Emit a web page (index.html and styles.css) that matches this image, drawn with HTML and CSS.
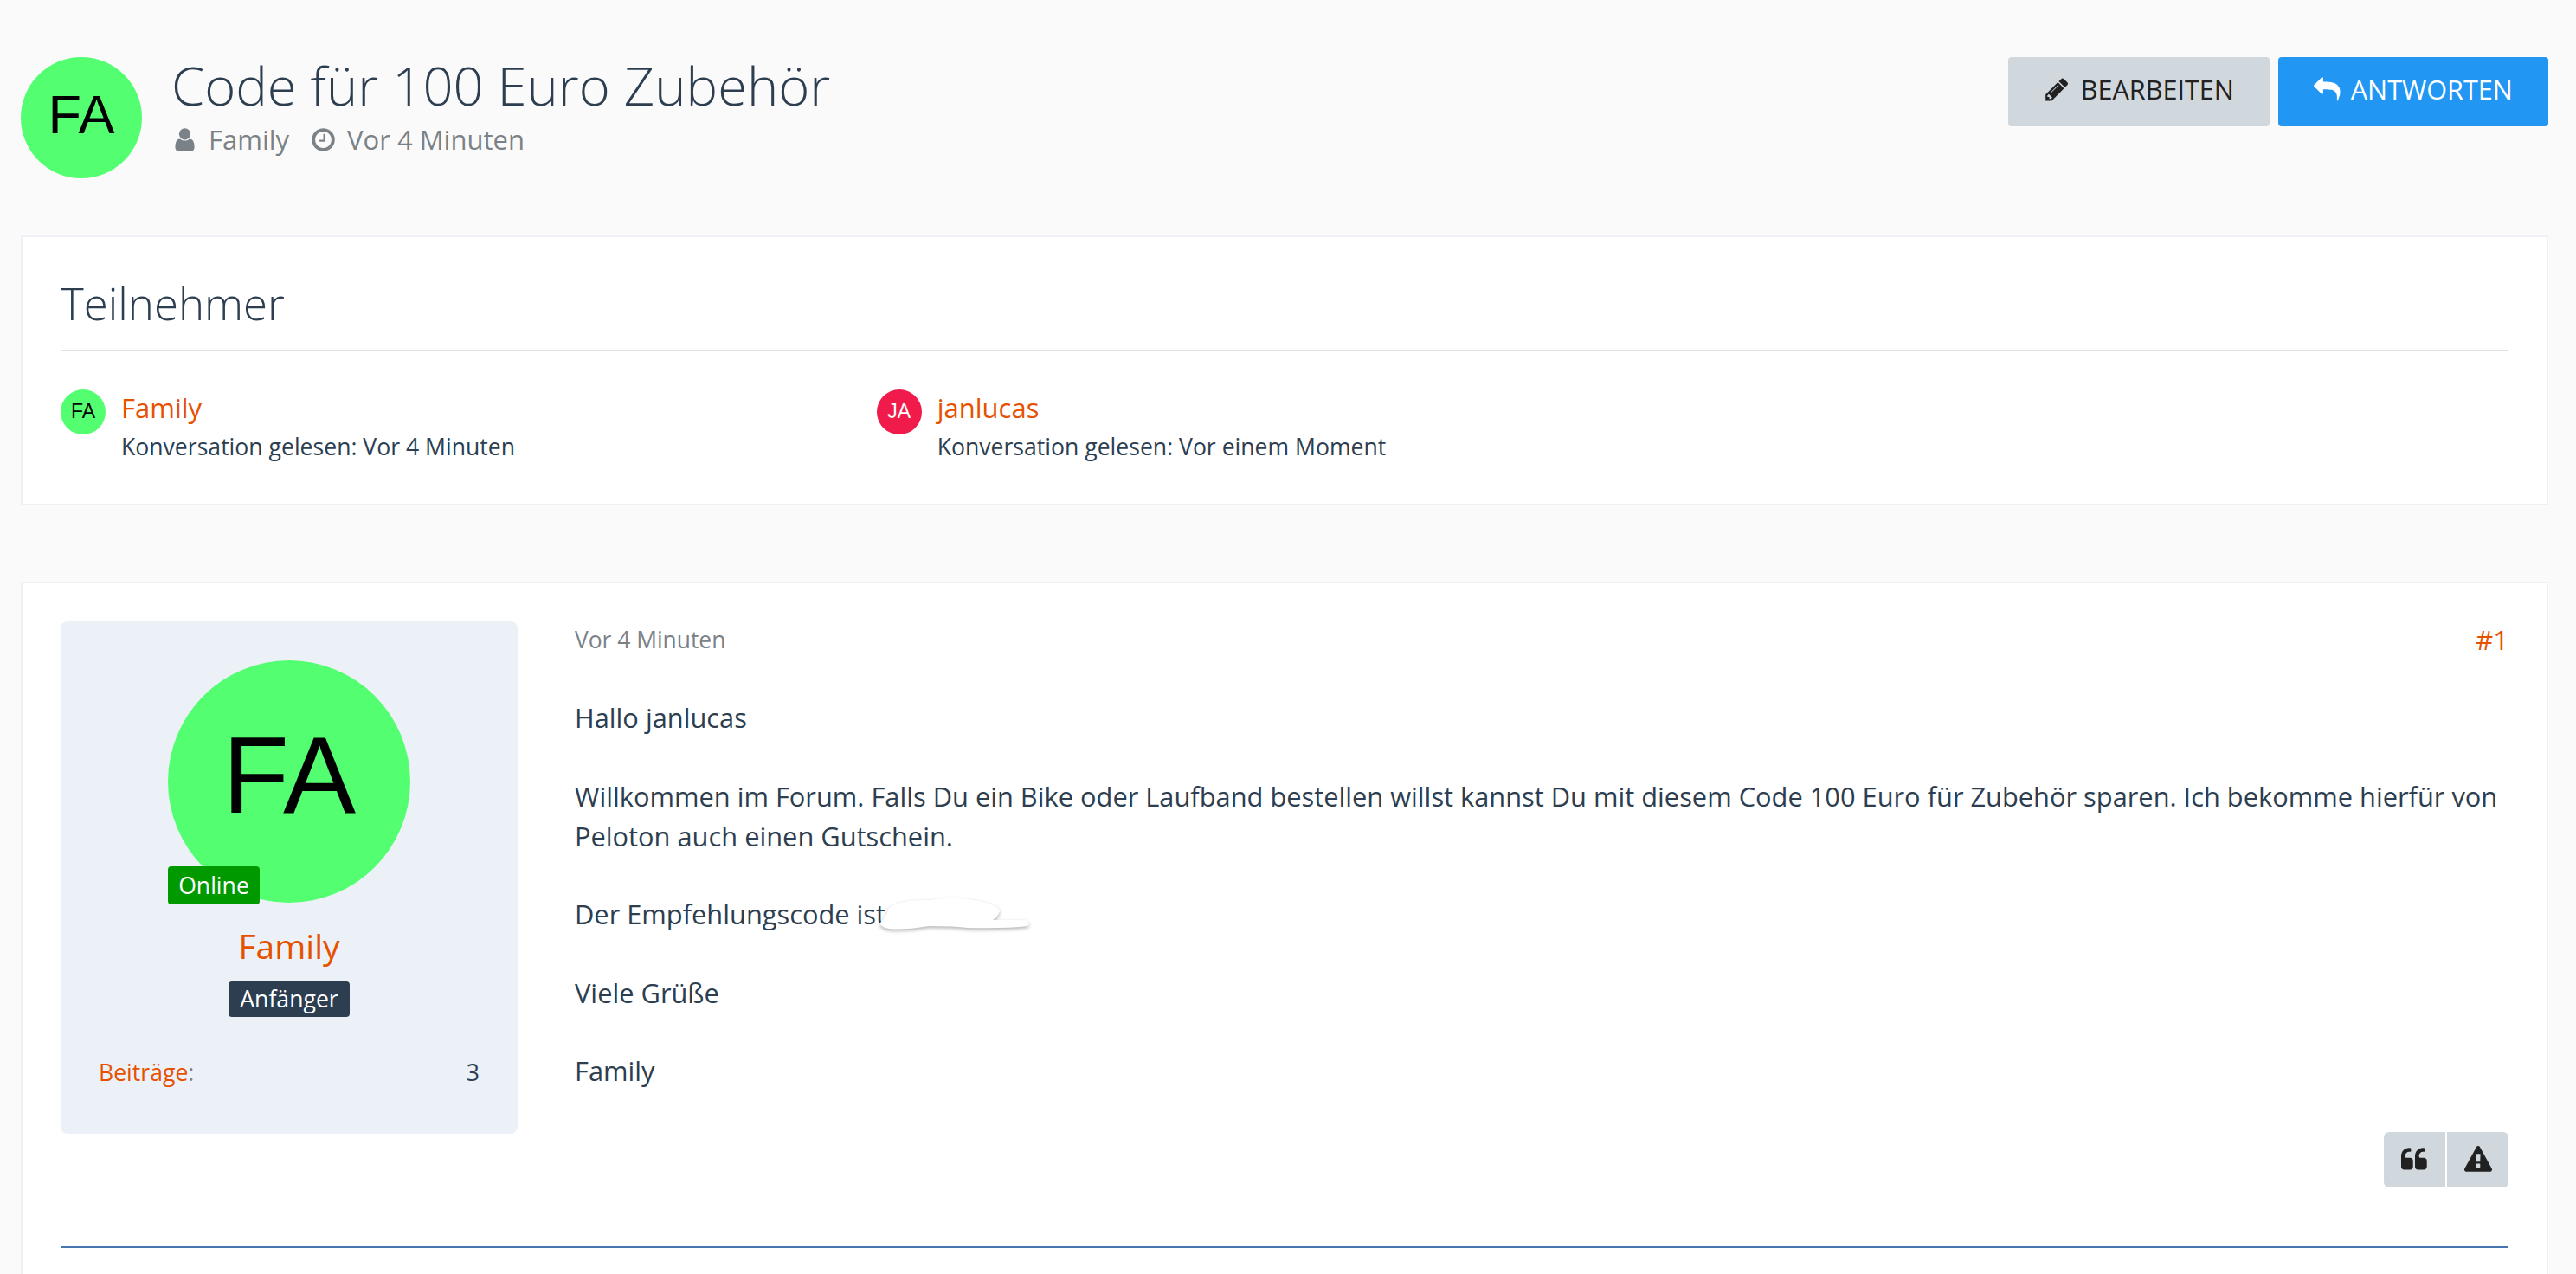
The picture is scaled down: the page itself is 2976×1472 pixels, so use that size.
FILE: index.html
```html
<!DOCTYPE html>
<html lang="de">
<head>
    <meta charset="UTF-8">
    <title>Code für 100 Euro Zubehör</title>
    <link rel="stylesheet" href="styles.css">
</head>
<body>
    <div class="page">
        <div class="topic-header">
            <div class="avatar avatar-md avatar-green">FA</div>
            <div class="topic-info">
                <h1>Code für 100 Euro Zubehör</h1>
                <div class="topic-meta">
                    <span class="meta-item">
                        <svg class="icon" viewBox="0 0 1792 1792"><path d="M1536 1399q0 109-62.5 187t-150.5 78h-854q-88 0-150.5-78t-62.5-187q0-85 8.5-160.5t31.5-152 58.5-131 94-89 134.5-34.5q131 128 313 128t313-128q76 0 134.5 34.5t94 89 58.5 131 31.5 152 8.5 160.5zm-256-887q0 159-112.5 271.5t-271.5 112.5-271.5-112.5-112.5-271.5 112.5-271.5 271.5-112.5 271.5 112.5 112.5 271.5z"/></svg>
                        Family
                    </span>
                    <span class="meta-item">
                        <svg class="icon" viewBox="0 0 1792 1792"><path d="M1024 544v448q0 14-9 23t-23 9h-320q-14 0-23-9t-9-23v-64q0-14 9-23t23-9h224v-352q0-14 9-23t23-9h64q14 0 23 9t9 23zm416 352q0-148-73-273t-198-198-273-73-273 73-198 198-73 273 73 273 198 198 273 73 273-73 198-198 73-273zm224 0q0 209-103 385.5t-279.5 279.5-385.5 103-385.5-103-279.5-279.5-103-385.5 103-385.5 279.5-279.5 385.5-103 385.5 103 279.5 279.5 103 385.5z"/></svg>
                        Vor 4 Minuten
                    </span>
                </div>
            </div>
            <div class="topic-actions">
                <button class="btn btn-grey">
                    <svg class="icon" viewBox="0 0 1792 1792"><path d="M491 1536l91-91-235-235-91 91v107h128v128h107zm523-928q0-22-22-22-10 0-17 7l-542 542q-7 7-7 17 0 22 22 22 10 0 17-7l542-542q7-7 7-17zm-54-192l416 416-832 832h-416v-416zm683 96q0 53-37 90l-166 166-416-416 166-165q36-38 90-38 53 0 91 38l235 234q37 39 37 91z"/></svg>
                    BEARBEITEN
                </button>
                <button class="btn btn-blue">
                    <svg class="icon" viewBox="0 0 1792 1792"><path d="M1792 1120q0 166-127 451-3 7-10.5 24t-13.5 30-13 22q-12 17-28 17-15 0-23.5-10t-8.5-25q0-9 2.5-26.5t2.5-23.5q5-68 5-123 0-101-17.5-181t-48.5-138.5-80-101-105.5-69.5-133-42.5-154-21.5-175.5-6h-224v256q0 26-19 45t-45 19-45-19l-512-512q-19-19-19-45t19-45l512-512q19-19 45-19t45 19 19 45v256h224q713 0 875 403 53 134 53 333z"/></svg>
                    ANTWORTEN
                </button>
            </div>
        </div>

        <div class="card participants">
            <h2>Teilnehmer</h2>
            <div class="participant-list">
                <div class="participant">
                    <div class="avatar avatar-sm avatar-green">FA</div>
                    <div>
                        <a class="user-link">Family</a>
                        <div class="read-info">Konversation gelesen: Vor 4 Minuten</div>
                    </div>
                </div>
                <div class="participant">
                    <div class="avatar avatar-sm avatar-red">JA</div>
                    <div>
                        <a class="user-link">janlucas</a>
                        <div class="read-info">Konversation gelesen: Vor einem Moment</div>
                    </div>
                </div>
            </div>
        </div>

        <div class="card post">
            <div class="post-row">
                <div class="user-panel">
                    <div class="avatar-wrap">
                        <div class="avatar avatar-lg avatar-green">FA</div>
                        <span class="online-badge">Online</span>
                    </div>
                    <a class="panel-name">Family</a>
                    <span class="rank-badge">Anfänger</span>
                    <div class="panel-stat">
                        <span><span class="stat-label">Beiträge</span><span class="stat-colon">:</span></span>
                        <span>3</span>
                    </div>
                </div>
                <div class="post-main">
                    <div class="post-head">
                        <span class="post-date">Vor 4 Minuten</span>
                        <a class="post-number">#1</a>
                    </div>
                    <div class="post-body">
                        <p>Hallo janlucas</p>
                        <p>Willkommen im Forum. Falls Du ein Bike oder Laufband bestellen willst kannst Du mit diesem Code 100 Euro für Zubehör sparen. Ich bekomme hierfür von Peloton auch einen Gutschein.</p>
                        <p>Der Empfehlungscode ist<span class="redacted"><svg class="redact-blob" viewBox="0 0 176 38"><path d="M3 30 Q10 24 14 12 Q28 2 60 3 Q90 -2 118 4 Q140 8 142 16 Q140 22 134 26 L172 26 Q178 30 174 33 Q150 36 104 35 Q90 33 60 33 Q30 38 14 36 Q6 35 3 30 Z"/></svg></span></p>
                        <p>Viele Grüße</p>
                        <p>Family</p>
                    </div>
                    <div class="post-tools">
                        <button class="tool-btn">
                            <svg class="icon" viewBox="0 0 1792 1792"><path d="M768 960v384q0 80-56 136t-136 56h-384q-80 0-136-56t-56-136v-704q0-104 40.5-198.5t109.5-163.5 163.5-109.5 198.5-40.5h64q26 0 45 19t19 45v128q0 26-19 45t-45 19h-64q-106 0-181 75t-75 181v32q0 40 28 68t68 28h224q80 0 136 56t56 136zm896 0v384q0 80-56 136t-136 56h-384q-80 0-136-56t-56-136v-704q0-104 40.5-198.5t109.5-163.5 163.5-109.5 198.5-40.5h64q26 0 45 19t19 45v128q0 26-19 45t-45 19h-64q-106 0-181 75t-75 181v32q0 40 28 68t68 28h224q80 0 136 56t56 136z"/></svg>
                        </button>
                        <button class="tool-btn">
                            <svg class="icon" viewBox="0 0 1792 1792"><path d="M1024 1375v-190q0-14-9.5-23.5t-22.5-9.5h-192q-13 0-22.5 9.5t-9.5 23.5v190q0 14 9.5 23.5t22.5 9.5h192q13 0 22.5-9.5t9.5-23.5zm-2-374l18-459q0-12-10-19-13-11-24-11h-220q-11 0-24 11-10 7-10 21l17 457q0 10 10 16.5t24 6.5h185q14 0 23.5-6.5t10.5-16.5zm-14-934l768 1408q35 63-2 126-17 29-46.5 46t-63.5 17h-1536q-34 0-63.5-17t-46.5-46q-37-63-2-126l768-1408q17-31 47-49t65-18 65 18 47 49z"/></svg>
                        </button>
                    </div>
                </div>
            </div>
            <div class="post-divider"></div>
        </div>
    </div>
</body>
</html>
```

FILE: styles.css
```css
* {
    margin: 0;
    padding: 0;
    box-sizing: border-box;
}

html, body {
    height: 1472px;
    overflow: hidden;
}

body {
    font-family: 'Open Sans', 'Liberation Sans', sans-serif;
    background-color: #fafafa;
    color: #2c3e50;
    font-size: 30.8px;
}

.page {
    padding: 66px 32px 0 24px;
}

.icon {
    width: 1em;
    height: 1em;
    fill: currentColor;
    flex: none;
}

/* avatars */
.avatar {
    border-radius: 50%;
    display: flex;
    align-items: center;
    justify-content: center;
    font-family: 'Liberation Sans', Arial, sans-serif;
    flex: none;
}

.avatar-sm {
    width: 52px;
    height: 52px;
    font-size: 23px;
    padding-bottom: 2px;
}

.avatar-md {
    width: 140px;
    height: 140px;
    font-size: 63px;
    padding-bottom: 8px;
}

.avatar-lg {
    width: 280px;
    height: 280px;
    font-size: 126px;
    padding-bottom: 16px;
}

.avatar-green {
    background: #53ff70;
    color: #000;
}

.avatar-red {
    background: #f01a4b;
    color: #fff;
}

/* header */
.topic-header {
    display: flex;
    align-items: flex-start;
    height: 206px;
}

.topic-info {
    flex: 1;
    margin-left: 34px;
}

.topic-info h1 {
    font-size: 61.5px;
    font-weight: 300;
    line-height: 72px;
    margin-top: -4px;
}

.topic-meta {
    display: flex;
    gap: 24px;
    color: #7b8287;
    font-size: 31px;
    line-height: 44px;
    margin-top: 5px;
}

.meta-item {
    display: flex;
    align-items: center;
    gap: 12px;
}

.topic-actions {
    display: flex;
    gap: 10px;
}

.btn {
    height: 80px;
    border: none;
    border-radius: 4px;
    font-family: inherit;
    font-size: 30.6px;
    display: flex;
    align-items: center;
    justify-content: center;
    gap: 12px;
    padding-bottom: 6px;
}

.btn-grey {
    width: 302px;
    background: #d0d8dd;
    color: #212121;
}

.btn-blue {
    width: 312px;
    background: #2196f3;
    color: #fff;
}

/* cards */
.card {
    background: #fff;
    border: 2px solid #eef1f6;
    padding: 0 44px;
}

.participants {
    height: 312px;
}

.participants h2 {
    font-size: 51px;
    font-weight: 300;
    line-height: 80px;
    padding-top: 36px;
    height: 132px;
    border-bottom: 2px solid #dfe1e4;
}

.participant-list {
    display: grid;
    grid-template-columns: repeat(3, 1fr);
    margin-top: 44px;
}

.participant {
    display: flex;
    gap: 18px;
}

.user-link {
    color: #e65100;
    font-size: 31px;
    line-height: 42px;
    display: block;
}

.read-info {
    font-size: 26.6px;
    line-height: 48px;
}

.post {
    margin-top: 88px;
    padding-top: 44px;
    height: 900px;
}

.post-row {
    display: flex;
    height: 654px;
}

.user-panel {
    width: 528px;
    height: 592px;
    flex: none;
    background: #ecf1f8;
    border-radius: 8px;
    padding: 45px 44px 0;
    display: flex;
    flex-direction: column;
    align-items: center;
}

.avatar-wrap {
    position: relative;
}

.online-badge {
    position: absolute;
    left: 0;
    bottom: -2px;
    width: 106px;
    height: 44px;
    line-height: 44px;
    text-align: center;
    background: #009900;
    color: #fff;
    border-radius: 4px;
    font-size: 26.6px;
}

.panel-name {
    color: #e65100;
    font-size: 39px;
    line-height: 56px;
    margin-top: 22px;
}

.rank-badge {
    background: #2c3e50;
    color: #fff;
    font-size: 26.6px;
    line-height: 41px;
    width: 140px;
    text-align: center;
    border-radius: 4px;
    margin-top: 13px;
}

.panel-stat {
    width: 100%;
    display: flex;
    justify-content: space-between;
    font-size: 26.6px;
    line-height: 40px;
    margin-top: 44px;
}

.stat-label {
    color: #e65100;
}

.stat-colon {
    color: #7b8287;
}

.post-main {
    flex: 1;
    padding-left: 66px;
    display: flex;
    flex-direction: column;
    min-width: 0;
}

.post-head {
    display: flex;
    justify-content: space-between;
    align-items: center;
    line-height: 42px;
    font-size: 26.4px;
}

.post-date {
    color: #7b8287;
}

.post-number {
    color: #e65100;
    font-size: 31px;
}

.post-body {
    margin-top: 46px;
    line-height: 46px;
    flex: 1;
}

.post-body p {
    margin-bottom: 44.5px;
}

.redacted {
    position: relative;
}

.redact-blob {
    position: absolute;
    left: -10px;
    top: 2px;
    width: 176px;
    height: 38px;
    fill: #fff;
    filter: drop-shadow(0 2px 2px rgba(0,0,0,0.3));
}

.post-tools {
    display: flex;
    justify-content: flex-end;
    gap: 2px;
}

.tool-btn {
    width: 71px;
    height: 64px;
    border: none;
    background: #d0d8dd;
    color: #212121;
    font-size: 32px;
    display: flex;
    align-items: center;
    justify-content: center;
}

.tool-btn:first-child {
    border-radius: 6px 0 0 6px;
}

.tool-btn:last-child {
    border-radius: 0 6px 6px 0;
}

.post-divider {
    height: 2px;
    background: #4677ae;
    margin-top: 68px;
}
```
